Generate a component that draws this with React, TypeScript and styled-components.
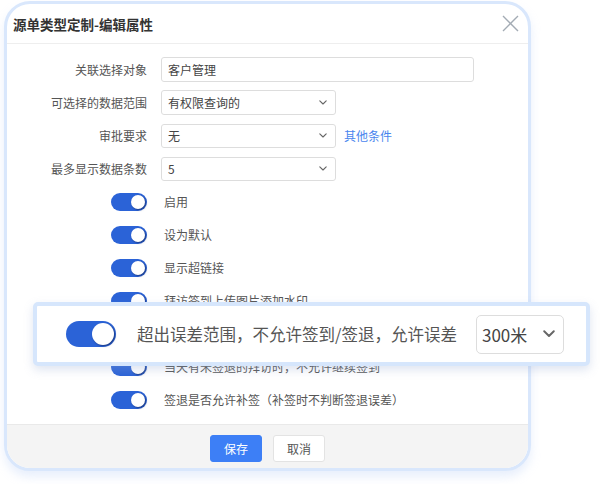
import React from "react";
import styled, { createGlobalStyle } from "styled-components";

const Global = createGlobalStyle`
  html, body { margin: 0; padding: 0; background: #ffffff; }
  body { font-family: "Noto Sans CJK SC", "Noto Sans", sans-serif; }
  * { box-sizing: border-box; }
`;

const Page = styled.div`
  position: relative;
  width: 600px;
  height: 484px;
  padding: 1px 0 0 4px;
  background: #ffffff;
  overflow: hidden;
`;

const Dialog = styled.div`
  width: 527px;
  height: 470px;
  border: 3px solid #d9e7fc;
  border-radius: 26px;
  background: #ffffff;
  box-shadow: 0 6px 10px rgba(190, 210, 245, 0.35);
  display: flex;
  flex-direction: column;
  overflow: hidden;
`;

const Header = styled.div`
  height: 40px;
  flex: none;
  display: flex;
  align-items: center;
  justify-content: space-between;
  padding: 0 8px 0 6px;
  border-bottom: 1px solid #eeeeee;
`;

const Title = styled.div`
  font-size: 13.5px;
  font-weight: 700;
  color: #333333;
  line-height: 20px;
`;

const Close = styled.div`
  width: 20px;
  height: 20px;
  display: flex;
  align-items: center;
  justify-content: center;
`;

const Body = styled.div`
  flex: 1;
  padding: 9px 0 0 0;
  display: flex;
  flex-direction: column;
`;

const Row = styled.div`
  height: 33px;
  display: flex;
  align-items: center;
  gap: 14px;
`;

const Label = styled.div`
  width: 140px;
  flex: none;
  text-align: right;
  font-size: 12px;
  color: #555555;
  line-height: 16px;
`;

const SwitchCell = styled.div`
  width: 140px;
  flex: none;
  display: flex;
  justify-content: flex-end;
`;

const Field = styled.div<{ $w: number; $h?: number }>`
  width: ${(p) => p.$w}px;
  height: ${(p) => p.$h ?? 25}px;
  border: 1px solid #dddddd;
  border-radius: 3px;
  background: #ffffff;
  display: flex;
  align-items: center;
  justify-content: space-between;
  padding: 0 8px 0 6px;
  font-size: 12px;
  color: #444444;
`;

const LinkText = styled.span`
  font-size: 12px;
  color: #4a86ee;
  margin-left: -6px;
`;

const ToggleText = styled.span`
  font-size: 12px;
  color: #555555;
  margin-left: 3px;
`;

const Track = styled.div<{ $lg?: boolean }>`
  position: relative;
  width: ${(p) => (p.$lg ? 50 : 36)}px;
  height: ${(p) => (p.$lg ? 26 : 18)}px;
  border-radius: ${(p) => (p.$lg ? 13 : 9)}px;
  background: #2b63d7;
  flex: none;
  &::after {
    content: "";
    position: absolute;
    top: 2px;
    right: 2px;
    width: ${(p) => (p.$lg ? 22 : 14)}px;
    height: ${(p) => (p.$lg ? 22 : 14)}px;
    border-radius: 50%;
    background: #ffffff;
    box-shadow: 1px 1px 2px rgba(10, 20, 60, 0.55);
  }
`;

const Footer = styled.div`
  flex: none;
  height: 44px;
  background: #f4f4f4;
  border-top: 1px solid #e9e9e9;
  display: flex;
  justify-content: center;
  align-items: flex-start;
  padding-top: 10px;
  gap: 11px;
`;

const Button = styled.div<{ $primary?: boolean }>`
  width: 52px;
  height: 27px;
  border-radius: 3px;
  display: flex;
  align-items: center;
  justify-content: center;
  font-size: 12px;
  background: ${(p) => (p.$primary ? "#3d7ff6" : "#ffffff")};
  color: ${(p) => (p.$primary ? "#ffffff" : "#555555")};
  border: 1px solid ${(p) => (p.$primary ? "#3d7ff6" : "#e3e3e3")};
`;

const Popup = styled.div`
  position: absolute;
  left: 33px;
  top: 302px;
  width: 557px;
  height: 64px;
  border: 4px solid #d6e6fc;
  border-radius: 5px;
  background: #ffffff;
  box-shadow: 0 4px 10px rgba(150, 170, 210, 0.3);
  display: flex;
  align-items: center;
  padding-left: 29px;
`;

const PopupText = styled.span`
  font-size: 16.5px;
  color: #555555;
  margin-left: 21px;
  white-space: nowrap;
  line-height: 24px;
`;

const PopupSelect = styled.div`
  margin-left: 19px;
  width: 88px;
  height: 39px;
  border: 1px solid #dddddd;
  border-radius: 5px;
  display: flex;
  align-items: center;
  justify-content: space-between;
  padding: 0 8px 0 5px;
  font-size: 17px;
  color: #444444;
`;

const Chevron = ({ size = 8 }: { size?: number }) => (
  <svg width={size} height={size * 0.6} viewBox="0 0 10 6">
    <path d="M1 1 L5 5 L9 1" fill="none" stroke="#666" strokeWidth={size > 9 ? 1.6 : 1.4} strokeLinecap="round" strokeLinejoin="round" />
  </svg>
);

const toggles = [
  "启用",
  "设为默认",
  "显示超链接",
  "拜访签到上传图片添加水印",
  "超出误差范围，不允许签到/签退",
  "当天有未签退的拜访时，不允许继续签到",
  "签退是否允许补签（补签时不判断签退误差）",
];

export default function App() {
  return (
    <Page>
      <Global />
      <Dialog>
        <Header>
          <Title>源单类型定制-编辑属性</Title>
          <Close>
            <svg width="17" height="17" viewBox="0 0 17 17">
              <path d="M1 1 L16 16 M16 1 L1 16" stroke="#a3abb4" strokeWidth="1.4" />
            </svg>
          </Close>
        </Header>
        <Body>
          <Row>
            <Label>关联选择对象</Label>
            <Field $w={313}>客户管理</Field>
          </Row>
          <Row>
            <Label>可选择的数据范围</Label>
            <Field $w={175}>
              有权限查询的
              <Chevron />
            </Field>
          </Row>
          <Row>
            <Label>审批要求</Label>
            <Field $w={175} $h={24}>
              无
              <Chevron />
            </Field>
            <LinkText>其他条件</LinkText>
          </Row>
          <Row>
            <Label>最多显示数据条数</Label>
            <Field $w={175} $h={24}>
              5
              <Chevron />
            </Field>
          </Row>
          {toggles.map((t) => (
            <Row key={t}>
              <SwitchCell>
                <Track />
              </SwitchCell>
              <ToggleText>{t}</ToggleText>
            </Row>
          ))}
        </Body>
        <Footer>
          <Button $primary>保存</Button>
          <Button>取消</Button>
        </Footer>
      </Dialog>
      <Popup>
        <Track $lg />
        <PopupText>超出误差范围，不允许签到/签退，允许误差</PopupText>
        <PopupSelect>
          300米
          <Chevron size={12} />
        </PopupSelect>
      </Popup>
    </Page>
  );
}
